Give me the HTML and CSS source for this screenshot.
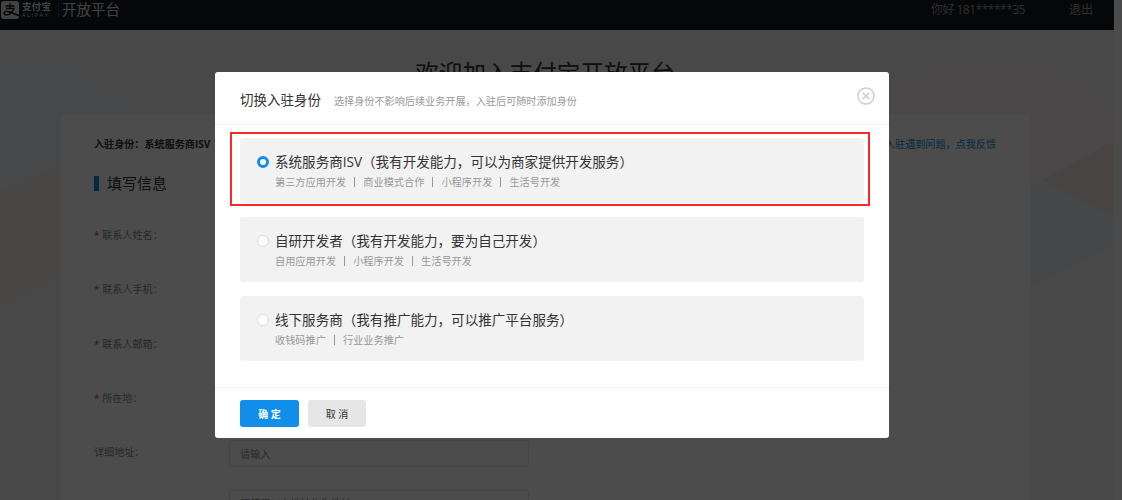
FILE: index.html
```html
<!DOCTYPE html>
<html lang="zh-CN">
<head>
    <meta charset="utf-8">
    <title>支付宝开放平台</title>
    <link rel="stylesheet" href="styles.css">
</head>
<body>
    <div class="page">
        <svg class="page-bg" width="1114" height="470" viewBox="0 30 1114 470">
            <polygon points="0,58 60,56 150,115 150,140 60,165 0,190" fill="#eaf2f7"/>
            <polygon points="0,190 61,165 61,278 0,308" fill="#f4ebeb"/>
            <polygon points="880,72 1032,58 1114,100 1114,260 1030,300 1030,115 880,115" fill="#f3eeee"/>
            <polygon points="1030,185 1044,180 1114,216 1114,245 1030,288" fill="#eaeef1"/>
            <polygon points="1042,180 1114,141 1114,217" fill="#f3e4e4"/>
            <polygon points="1030,288 1114,245 1114,500 1030,500" fill="#f0f2f4"/>
        </svg>

        <div class="header">
            <svg class="logo" width="18" height="18" viewBox="0 0 18 18">
                <rect width="18" height="18" rx="3" fill="#ddd"/>
                <path d="M4.500 5h9M9 2.500v5M5 7.600h7.800C12 10.800 9 13.900 5.800 13.900 3.900 13.900 2.900 13.200 3 12 3.200 10.300 5.500 9.900 8 10.700 11 11.700 14 13.400 18 14.600" fill="none" stroke="#16191e" stroke-width="1.500"/>
            </svg>
            <div class="brand">
                <span class="brand-cn">支付宝</span>
                <span class="brand-en">ALIPAY</span>
            </div>
            <span class="platform">开放平台</span>
            <span class="user">你好 181******35</span>
            <span class="logout">退出</span>
        </div>

        <h1 class="title">欢迎加入支付宝开放平台</h1>

        <div class="panel">
            <div class="identity">
                <strong>入驻身份：系统服务商ISV</strong>
                <a class="feedback">入驻遇到问题，点我反馈</a>
            </div>
            <h2 class="section-title">填写信息</h2>
            <div class="row"><label><i>*</i> 联系人姓名：</label></div>
            <div class="row"><label><i>*</i> 联系人手机：</label></div>
            <div class="row"><label><i>*</i> 联系人邮箱：</label></div>
            <div class="row"><label><i>*</i> 所在地：</label></div>
            <div class="row address"><label>详细地址：</label><div class="input">请输入</div></div>
            <div class="row"><label></label><div class="input">可使用以上地址作为地址</div></div>
        </div>
    </div>

    <div class="mask">
        <div class="dialog">
            <div class="dialog-header">
                <span class="dialog-title">切换入驻身份</span>
                <span class="dialog-tip">选择身份不影响后续业务开展，入驻后可随时添加身份</span>
                <svg class="close" width="18" height="18" viewBox="0 0 18 18" fill="none" stroke="#ccc">
                    <circle cx="9" cy="9" r="8" stroke-width="1.400"/>
                    <path d="M5.700 5.700l6.600 6.600M12.300 5.700l-6.600 6.600" stroke-width="1.400"/>
                </svg>
            </div>

            <div class="dialog-body">
                <div class="option selected">
                    <span class="radio checked"></span>
                    <div>
                        <div class="option-title">系统服务商ISV（我有开发能力，可以为商家提供开发服务）</div>
                        <div class="tags"><span>第三方应用开发</span><span>商业模式合作</span><span>小程序开发</span><span>生活号开发</span></div>
                    </div>
                </div>
                <div class="option">
                    <span class="radio"></span>
                    <div>
                        <div class="option-title">自研开发者（我有开发能力，要为自己开发）</div>
                        <div class="tags"><span>自用应用开发</span><span>小程序开发</span><span>生活号开发</span></div>
                    </div>
                </div>
                <div class="option">
                    <span class="radio"></span>
                    <div>
                        <div class="option-title">线下服务商（我有推广能力，可以推广平台服务）</div>
                        <div class="tags"><span>收钱码推广</span><span>行业业务推广</span></div>
                    </div>
                </div>
            </div>

            <div class="dialog-footer">
                <button class="btn primary">确 定</button>
                <button class="btn">取 消</button>
            </div>
        </div>
    </div>
</body>
</html>
```
FILE: styles.css
```css
* {
    box-sizing: border-box;
}
body {
    margin: 0;
    height: 500px;
    overflow: hidden;
    background: #fbfafa;
    color: #333;
    font-family: "Open Sans", "Noto Sans CJK SC", sans-serif;
    font-size: 10.1px;
}
.page {
    position: relative;
    width: 1114px;
    height: 500px;
    overflow: hidden;
    background: #f0f2f4;
}
.page-bg {
    position: absolute;
    top: 30px;
    left: 0;
}

/* top bar */
.header {
    position: relative;
    display: flex;
    align-items: flex-start;
    height: 30px;
    padding: 1px 21px 0 1px;
    background: #16191e;
    color: #ddd;
}
.brand {
    display: flex;
    flex-direction: column;
    width: 37px;
    height: 16px;
    margin: 1px 0 0 3px;
    border-right: 1px solid #444;
}
.brand-cn {
    font-size: 9.6px;
    font-weight: bold;
    line-height: 10px;
    white-space: nowrap;
}
.brand-en {
    font-size: 5.5px;
    line-height: 6px;
    letter-spacing: 1.6px;
}
.platform {
    margin-left: 3px;
    font-size: 14.5px;
    line-height: 18px;
}
.user,
.logout {
    color: #999;
    font-size: 12px;
    line-height: 17px;
}
.user {
    margin-left: auto;
    letter-spacing: -0.5px;
}
.logout {
    margin-left: 44px;
}

.title {
    position: relative;
    margin: 28px 0 0;
    padding-right: 24px;
    font-size: 23.6px;
    font-weight: normal;
    line-height: 30px;
    text-align: center;
}

/* form */
.panel {
    position: relative;
    width: 969px;
    height: 420px;
    margin: 27px 0 0 61px;
    padding: 19px 34px 0 33px;
    background: #fdfdfd;
}
.identity {
    display: flex;
    justify-content: space-between;
    line-height: 20px;
}
.feedback {
    color: #108ee9;
}
.section-title {
    margin: 22px 0 31px;
    padding-left: 8px;
    border-left: 5px solid #108ee9;
    font-size: 15px;
    font-weight: normal;
    line-height: 15px;
}
.row {
    display: flex;
    height: 27px;
    margin-bottom: 27.3px;
    color: #888;
    line-height: 27px;
}
.row label {
    width: 135px;
}
.row i {
    color: #f04134;
    font-style: normal;
}
.row.address {
    margin-bottom: 24px;
}
.address .input {
    margin-top: 1px;
    line-height: 27px;
}
.input {
    width: 300px;
    height: 27px;
    padding-left: 10px;
    border: 1px solid #e8e8e8;
    border-radius: 3px;
    line-height: 25px;
}

/* dialog */
.mask {
    position: absolute;
    top: 0;
    left: 0;
    width: 1122px;
    height: 500px;
    padding: 72px 0 0 215px;
    background: rgba(0, 0, 0, 0.7);
}
.dialog {
    width: 674px;
    height: 366px;
    background: #fff;
    border-radius: 3px;
}
.dialog-header {
    display: flex;
    align-items: center;
    height: 53px;
    padding: 2px 14px 0 25px;
    border-bottom: 1px solid #f2f2f2;
}
.dialog-title {
    font-size: 13.5px;
}
.dialog-tip {
    margin-left: 13px;
    padding-top: 2px;
    color: #999;
    font-size: 10.15px;
}
.close {
    margin: -7px 0 0 auto;
}
.dialog-body {
    display: flex;
    flex-direction: column;
    gap: 14px;
    height: 262px;
    padding: 12.5px 25px 0;
}
.option {
    position: relative;
    display: flex;
    flex: none;
    gap: 6px;
    height: 65.3px;
    padding: 14px 17px 0;
    background: #f2f2f2;
    border-radius: 3px;
}
.option.selected::after {
    content: "";
    position: absolute;
    top: -6px;
    right: -6px;
    bottom: -3px;
    left: -10px;
    border: 2px solid #f82a2a;
}
.radio {
    width: 12px;
    height: 12px;
    margin-top: 4px;
    border: 1px solid #d9d9d9;
    border-radius: 50%;
    background: #fff;
}
.radio.checked {
    border: 3px solid #108ee9;
}
.option-title {
    font-size: 13.55px;
    line-height: 20px;
}
.tags {
    display: flex;
    margin-top: 2px;
    color: #999;
    font-size: 10.2px;
    line-height: 16px;
}
.tags span + span::before {
    content: "";
    display: inline-block;
    width: 1px;
    height: 10px;
    margin: 0 8px;
    background: #999;
    vertical-align: -1px;
}
.dialog-footer {
    display: flex;
    gap: 9px;
    padding: 12px 25px 0;
    border-top: 1px solid #f2f2f2;
}
.btn {
    width: 58px;
    height: 27px;
    padding: 0;
    border: 0;
    border-radius: 3px;
    background: #e6e6e6;
    color: #333;
    font-family: inherit;
    font-size: 10px;
}
.btn.primary {
    width: 59px;
    background: #108ee9;
    color: #fff;
    font-weight: bold;
}
```
